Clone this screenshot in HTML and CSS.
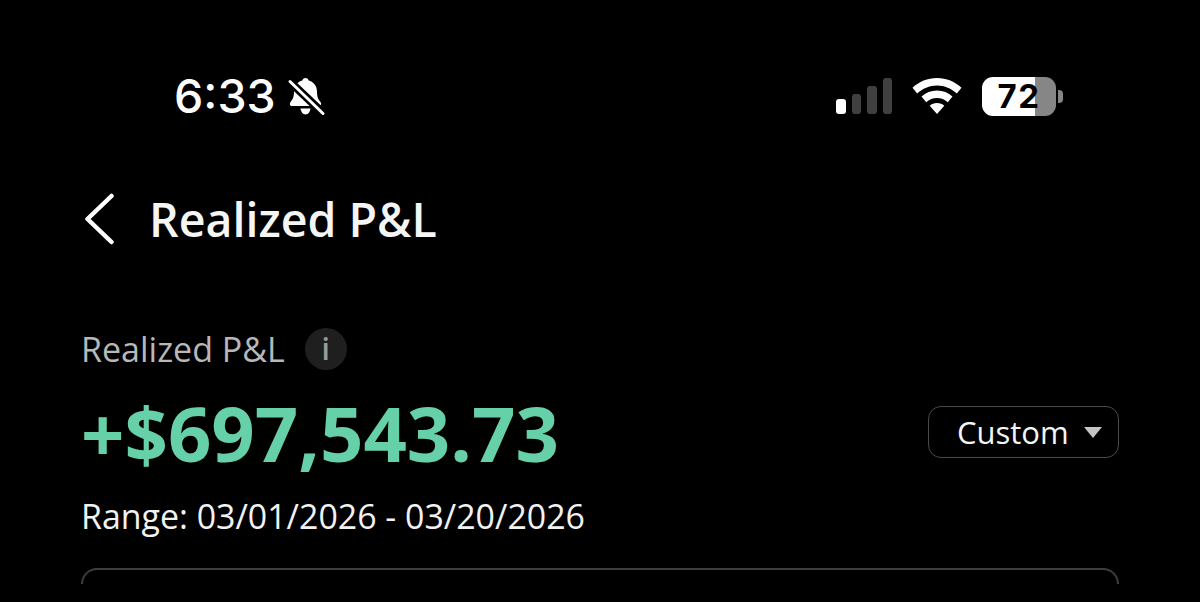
FILE: index.html
```html
<!DOCTYPE html>
<html lang="en">
<head>
<meta charset="utf-8">
<title>Realized P&amp;L</title>
<link rel="stylesheet" href="styles.css">
</head>
<body>
<div class="screen">
  <header class="status">
    <div class="status-left">
      <span class="time">6:33</span>
      <svg class="bell" width="38" height="38" viewBox="0 0 38 38">
        <path class="fill-white" d="M19.500 0c1.700 0 2.900 1 3.100 2.600 5.200 1.300 8.400 5.600 8.400 11 0 5.500 1.200 8 3.600 10.600 1.100 1.300.4 3.800-1.600 3.800H6c-2 0-2.700-2.500-1.600-3.800C6.800 21.600 8 19.100 8 13.600c0-5.400 3.200-9.700 8.400-11C16.600 1 17.800 0 19.500 0z"/>
        <path class="fill-white" d="M14.500 30.500h10c-.4 3.200-2.300 6-5 6s-4.600-2.800-5-6z"/>
        <path class="slash-cut" d="M0 0l38 36"/>
        <path class="slash" d="M4 3.500l33 32"/>
      </svg>
    </div>
    <div class="status-right">
      <svg class="signal" width="58" height="36" viewBox="0 0 58 36">
        <rect class="bar-on" x="0" y="21" width="10" height="15" rx="3"/>
        <rect class="bar-off" x="16" y="16" width="9" height="20" rx="3"/>
        <rect class="bar-off" x="31" y="8" width="10" height="28" rx="3"/>
        <rect class="bar-off" x="47" y="0" width="9" height="36" rx="3"/>
      </svg>
      <svg class="wifi" width="50" height="36" viewBox="0 0 50 36">
        <path class="fill-white" d="M25 0c9.500 0 18 3.600 24.500 9.800L44.800 15.500C39.500 10.500 32.600 7.500 25 7.500S10.500 10.500 5.200 15.500L.5 9.800C7 3.600 15.500 0 25 0z"/>
        <path class="fill-white" d="M25 12.500c6 0 11.300 2.300 15.500 6.100l-4.700 5.600C32.900 21.600 29.100 20 25 20s-7.900 1.600-10.800 4.200l-4.700-5.600C13.700 14.800 19 12.500 25 12.500z"/>
        <path class="fill-white" d="M25 25c2.800 0 5.400 1 7.300 2.800L25 36l-7.300-8.200C19.600 26 22.200 25 25 25z"/>
      </svg>
      <div class="battery">
        <div class="battery-body"><span class="battery-level">72</span></div>
        <div class="battery-cap"></div>
      </div>
    </div>
  </header>

  <nav class="nav">
    <svg class="back" width="34" height="52" viewBox="0 0 34 52">
      <path d="M28.500 3L4.500 26l24 23"/>
    </svg>
    <h1 class="nav-title">Realized P&amp;L</h1>
  </nav>

  <main class="summary">
    <div class="label-row">
      <span class="label">Realized P&amp;L</span>
      <span class="info">i</span>
    </div>
    <div class="amount-row">
      <span class="amount">+$697,543.73</span>
      <button class="range-select" type="button">Custom<span class="caret"></span></button>
    </div>
    <div class="range">Range: 03/01/2026 - 03/20/2026</div>
    <div class="card"></div>
  </main>
</div>
</body>
</html>
```
FILE: styles.css
```css
* { box-sizing: border-box; }
html, body { margin: 0; padding: 0; background: #000; }
.screen {
  width: 1200px;
  height: 602px;
  overflow: hidden;
  background: #000;
  color: #fff;
  font-family: "Open Sans", "Liberation Sans", sans-serif;
}
.status {
  display: flex;
  justify-content: space-between;
  align-items: center;
  height: 62px;
  margin-top: 65px;
  padding: 0 137px 0 174px;
}
.status-left { display: flex; align-items: center; gap: 10px; }
.time {
  font-family: Inter, "Liberation Sans", sans-serif;
  font-size: 46.500px;
  font-weight: 500;
  line-height: 62px;
}
.bell { margin-top: 2px; overflow: visible; }
.fill-white { fill: #fff; }
.slash-cut { stroke: #000; stroke-width: 8; fill: none; }
.slash { stroke: #fff; stroke-width: 3; fill: none; stroke-linecap: round; }
.status-right { display: flex; align-items: center; }
.signal { margin-right: 18px; }
.bar-on { fill: #fff; }
.bar-off { fill: #404040; }
.wifi { margin-right: 20px; }
.battery { display: flex; align-items: center; gap: 2px; }
.battery-body {
  width: 74px;
  height: 39px;
  border-radius: 11px;
  background: linear-gradient(90deg, #fff 0, #fff 72%, #868686 72%, #868686 100%);
  display: flex;
  align-items: center;
  justify-content: center;
}
.battery-level {
  color: #000;
  font-family: Inter, "Liberation Sans", sans-serif;
  font-size: 33px;
  font-weight: 700;
  letter-spacing: 1.500px;
  line-height: 38px;
}
.battery-cap {
  width: 5px;
  height: 13px;
  border-radius: 0 4px 4px 0;
  background: #868686;
}
.nav {
  display: flex;
  align-items: center;
  gap: 32px;
  height: 60px;
  margin-top: 62px;
  padding-left: 83px;
}
.back path { fill: none; stroke: #fff; stroke-width: 4.500; stroke-linecap: round; stroke-linejoin: round; }
.nav-title {
  margin: 0;
  font-size: 46.500px;
  font-weight: 600;
  line-height: 60px;
  color: #f5f5f5;
}
.summary { padding: 0 81px; }
.label-row {
  display: flex;
  align-items: center;
  gap: 20px;
  height: 48px;
  margin-top: 76px;
}
.label { font-size: 34px; font-weight: 400; color: #b8b8b8; line-height: 48px; }
.info {
  width: 42px;
  height: 42px;
  border-radius: 50%;
  background: #1f1f1f;
  color: #9a9a9a;
  font-size: 30px;
  font-weight: 600;
  line-height: 42px;
  text-align: center;
}
.amount-row {
  display: flex;
  justify-content: space-between;
  align-items: center;
  height: 84px;
  margin-top: 18px;
}
.amount {
  font-size: 76px;
  font-weight: 700;
  line-height: 84px;
  color: #66d1a8;
}
.range-select {
  display: flex;
  align-items: center;
  gap: 15px;
  width: 191px;
  height: 52px;
  margin-top: -2px;
  padding: 0 0 0 28px;
  border: 1.500px solid #4a4a4a;
  border-radius: 13px;
  background: transparent;
  color: #f5f5f5;
  font-family: inherit;
  font-size: 31px;
  font-weight: 400;
}
.caret {
  width: 0;
  height: 0;
  border-left: 9px solid transparent;
  border-right: 9px solid transparent;
  border-top: 11px solid #c4c4c4;
}
.range {
  height: 44px;
  margin-top: 19px;
  font-size: 33.900px;
  line-height: 44px;
  color: #f2f2f2;
}
.card {
  height: 16px;
  margin-top: 30px;
  border: 2px solid #3e3e3e;
  border-bottom: 0;
  border-radius: 18px 18px 0 0;
}
```
